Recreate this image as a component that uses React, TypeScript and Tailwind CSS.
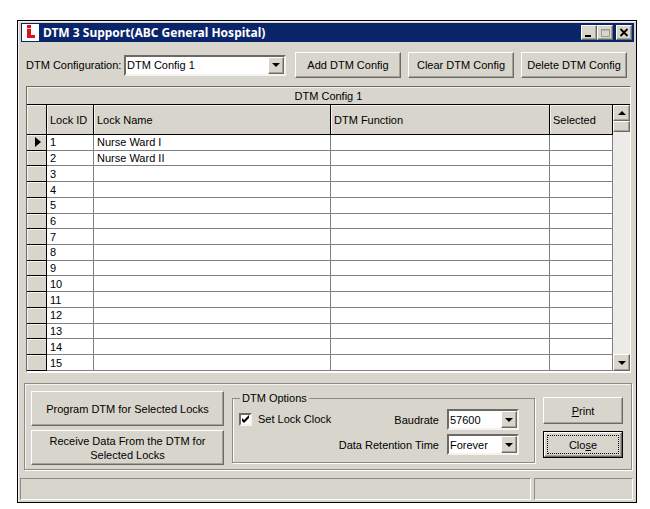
import { useState } from "react";
import type { ReactNode } from "react";
import clsx from "clsx";

interface Lock {
  id: number;
  name: string;
}

const lockNames = ["Nurse Ward I", "Nurse Ward II"];

const locks: Lock[] = Array.from({ length: 15 }, (_, i) => ({
  id: i + 1,
  name: lockNames[i] ?? "",
}));

const raised =
  "border border-t-white border-l-white border-r-[#6b6a66] border-b-[#6b6a66] shadow-[inset_-1px_-1px_0_#a3a19a]";

function Button({ className, children }: { className?: string; children: ReactNode }) {
  return (
    <button type="button" className={clsx("bg-[#d8d6cc] text-center leading-[14px]", raised, className)}>
      {children}
    </button>
  );
}

function Arrow({ up = false }: { up?: boolean }) {
  return (
    <svg width="8" height="4" viewBox="0 0 8 4" className="block">
      <path d={up ? "M0 4L4 0L8 4Z" : "M0 0H8L4 4Z"} fill="#000" />
    </svg>
  );
}

interface ComboProps {
  id: string;
  options: string[];
  className?: string;
}

function Combo({ id, options, className }: ComboProps) {
  return (
    <div
      className={clsx(
        "relative h-[21px] border-2 border-t-[#6b6a66] border-l-[#6b6a66] border-r-[#f4f3ef] border-b-[#f4f3ef] bg-white",
        className
      )}
    >
      <select id={id} className="block h-full w-full appearance-none bg-white pl-px pr-4 leading-[16px] outline-none">
        {options.map((option) => (
          <option key={option}>{option}</option>
        ))}
      </select>
      <span
        className={clsx(
          "pointer-events-none absolute inset-y-0 right-0 flex w-4 items-center justify-center bg-[#d8d6cc]",
          raised
        )}
      >
        <Arrow />
      </span>
    </div>
  );
}

function TitleBar() {
  const control = clsx("flex h-[15px] w-4 items-center justify-center bg-[#d8d6cc]", raised);

  return (
    <header className="mr-[2px] ml-[3px] mt-[2px] flex h-[19px] items-center bg-[#0a246a] pr-[2px]">
      <svg width="17" height="17" viewBox="0 0 17 17" className="ml-px shrink-0">
        <rect width="17" height="17" fill="#fff" />
        <path d="M5 1h4v3H5zM5 5h4v6h4v3H5z" fill="#d9161c" />
        <path d="M5 4h4v1H5z" fill="#f3b9ba" />
      </svg>
      <h1 className="ml-1 flex-1 font-['Noto_Sans',sans-serif] text-[12px] leading-[18px] font-bold text-white">
        DTM 3 Support(ABC General Hospital)
      </h1>
      <button type="button" aria-label="Minimize" className={control}>
        <svg width="10" height="9" viewBox="0 0 10 9">
          <path d="M1 7h6v2H1z" fill="#000" />
        </svg>
      </button>
      <button type="button" aria-label="Maximize" disabled className={control}>
        <svg width="11" height="10" viewBox="0 0 11 10">
          <path d="M1.5 1.5h8v7h-8zM1 2h9" fill="none" stroke="#9b9992" />
        </svg>
      </button>
      <button type="button" aria-label="Close" className={clsx(control, "ml-[3px]")}>
        <svg width="10" height="9" viewBox="0 0 10 9">
          <path d="M1.5 1L8.5 8M8.5 1L1.5 8" stroke="#000" strokeWidth="1.8" />
        </svg>
      </button>
    </header>
  );
}

function LockTable() {
  const head = "border-r border-b border-black pl-[3px] text-left font-normal shadow-[inset_1px_1px_0_#f4f3ef]";
  const cell = "border-r border-b border-[#808080] p-0 pl-[3px]";

  return (
    <section className="mr-[5px] ml-2 mt-2 border-t border-l border-[#6b6a66] border-b-white border-b-2 border-r border-r-white">
      <h2 className="h-[18px] border-b border-black text-center leading-[18px] shadow-[inset_1px_1px_0_#f4f3ef]">
        DTM Config 1
      </h2>
      <div className="flex">
        <table className="h-[266px] flex-1 table-fixed border-separate border-spacing-0 bg-white leading-[14px]">
          <colgroup>
            <col className="w-[20px]" />
            <col className="w-[47px]" />
            <col />
            <col className="w-[219px]" />
            <col className="w-[63px]" />
          </colgroup>
          <thead className="bg-[#d8d6cc]">
            <tr className="h-[30px]">
              <th className={head} aria-label="Current row" />
              <th className={head}>Lock ID</th>
              <th className={head}>Lock Name</th>
              <th className={head}>DTM Function</th>
              <th className={head}>Selected</th>
            </tr>
          </thead>
          <tbody>
            {locks.map((lock) => (
              <tr key={lock.id}>
                <td className="border-r border-b border-black bg-[#d8d6cc] p-0 shadow-[inset_1px_1px_0_#f4f3ef]">
                  {lock.id === 1 && (
                    <svg width="6" height="10" viewBox="0 0 6 10" className="ml-2 block">
                      <path d="M0 0L6 5L0 10Z" fill="#000" />
                    </svg>
                  )}
                </td>
                <td className={cell}>{lock.id}</td>
                <td className={cell}>{lock.name}</td>
                <td className={cell} />
                <td className={cell} />
              </tr>
            ))}
          </tbody>
        </table>
        <div className="flex w-[17px] flex-col bg-[#ecebe7]">
          <button
            type="button"
            aria-label="Scroll up"
            className={clsx("flex h-4 items-center justify-center bg-[#d8d6cc]", raised)}
          >
            <Arrow up />
          </button>
          <div className={clsx("h-[11px] bg-[#d8d6cc]", raised)} />
          <div className="flex-1" />
          <button
            type="button"
            aria-label="Scroll down"
            className={clsx("flex h-[17px] items-center justify-center bg-[#d8d6cc]", raised)}
          >
            <Arrow />
          </button>
        </div>
      </div>
    </section>
  );
}

function DtmOptions() {
  const [setClock, setSetClock] = useState(true);

  return (
    <fieldset className="ml-2 flex h-[72px] min-w-0 flex-1 border border-[#8c8a84] px-[6px] pt-1 whitespace-nowrap shadow-[1px_1px_0_#fff,inset_1px_0_0_#fff]">
      <legend className="ml-px px-[2px] leading-[14px]">DTM Options</legend>
      <label className="mt-[2px] flex h-[16px] items-center gap-[6px]">
        <span className="relative block h-[13px] w-[13px]">
          <input
            type="checkbox"
            checked={setClock}
            onChange={(e) => setSetClock(e.target.checked)}
            className="block h-[13px] w-[13px] appearance-none border-2 border-t-[#6b6a66] border-l-[#6b6a66] border-r-[#f4f3ef] border-b-[#f4f3ef] bg-white"
          />
          {setClock && (
            <svg width="13" height="13" viewBox="0 0 13 13" className="pointer-events-none absolute inset-0">
              <path d="M3 5v3l2 2l5-5V2L5 7Z" fill="#000" />
            </svg>
          )}
        </span>
        Set Lock Clock
      </label>
      <div className="ml-auto mr-[9px] grid grid-cols-[auto_72px] content-start items-center gap-x-2 gap-y-[4px] text-right">
        <label htmlFor="baudrate">Baudrate</label>
        <Combo id="baudrate" options={["57600", "38400", "19200", "9600"]} />
        <label htmlFor="retention">Data Retention Time</label>
        <Combo id="retention" options={["Forever", "1 Day", "1 Week"]} />
      </div>
    </fieldset>
  );
}

export default function App() {
  return (
    <div className="bg-white pt-5 pr-[13px] pb-[7px] pl-[17px] font-['Liberation_Sans',Arial,sans-serif] text-[11px] leading-[14px] text-black">
      <main className="border border-black bg-[#d8d6cc] shadow-[inset_1px_1px_0_#f4f3ef]">
        <TitleBar />

        <div className="mt-[10px] flex items-center pr-[9px] pl-2">
          <label htmlFor="config" className="w-[98px] whitespace-nowrap">
            DTM Configuration:
          </label>
          <Combo id="config" options={["DTM Config 1"]} className="flex-1" />
          <div className="ml-[9px] flex gap-[7px]">
            <Button className="h-[26px] w-[106px]">Add DTM Config</Button>
            <Button className="h-[26px] w-[106px]">Clear DTM Config</Button>
            <Button className="h-[26px] w-[106px]">Delete DTM Config</Button>
          </div>
        </div>

        <LockTable />

        <div className="mr-1 ml-[6px] mt-[10px] border border-[#8c8a84] shadow-[1px_1px_0_#fff,inset_1px_1px_0_#f4f3ef]">
          <div className="flex h-[85px] pt-[7px] pr-2 pl-[6px]">
            <div className="flex flex-col gap-[4px]">
              <Button className="h-[35px] w-[193px]">Program DTM for Selected Locks</Button>
              <Button className="h-[35px] w-[193px]">
                Receive Data From the DTM for
                <br />
                Selected Locks
              </Button>
            </div>
            <DtmOptions />
            <div className="ml-2 flex flex-col gap-[7px] pt-[6px]">
              <Button className="h-[27px] w-20">
                <u>P</u>rint
              </Button>
              <button type="button" className="h-[27px] w-20 border border-black bg-[#d8d6cc]">
                <span className={clsx("block h-full p-[2px]", raised)}>
                  <span className="flex h-full items-center justify-center border border-dotted border-black">
                    <span>
                      Clo<u>s</u>e
                    </span>
                  </span>
                </span>
              </button>
            </div>
          </div>
        </div>

        <footer className="mt-[8px] flex h-[24px] gap-[3px] pr-[3px] pb-[2px] pl-[2px]">
          <div className="flex-1 border border-t-[#8c8a84] border-l-[#8c8a84] border-r-white border-b-white" />
          <div className="w-[99px] border border-t-[#8c8a84] border-l-[#8c8a84] border-r-white border-b-white" />
        </footer>
      </main>
    </div>
  );
}
